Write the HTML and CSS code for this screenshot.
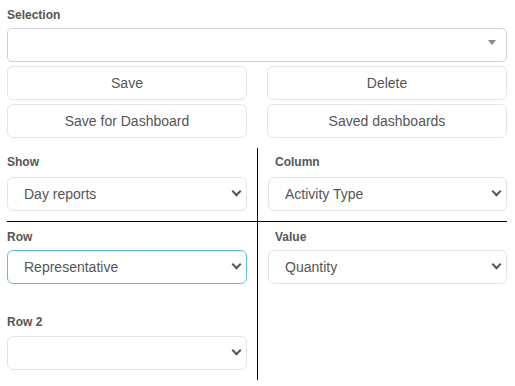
FILE: index.html
```html
<!DOCTYPE html>
<html>
<head>
<meta charset="utf-8">
<link rel="stylesheet" href="styles.css">
</head>
<body>
<div class="page">
  <label class="lbl lbl-top">Selection</label>
  <div class="sel2"><span class="sel2-arrow"></span></div>
  <div class="btn-grid">
    <button class="btn">Save</button>
    <button class="btn">Delete</button>
    <button class="btn">Save for Dashboard</button>
    <button class="btn">Saved dashboards</button>
  </div>
  <div class="pivot">
    <div class="cell cell-l top">
      <label class="lbl">Show</label>
      <div class="select-wrap"><select class="select"><option>Day reports</option></select></div>
    </div>
    <div class="cell cell-r top">
      <label class="lbl lbl-r">Column</label>
      <div class="select-wrap"><select class="select"><option>Activity Type</option></select></div>
    </div>
    <div class="cell cell-l bottom">
      <div class="group">
        <label class="lbl">Row</label>
        <div class="select-wrap"><select class="select focus"><option>Representative</option></select></div>
      </div>
      <div class="group group-2">
        <label class="lbl">Row 2</label>
        <div class="select-wrap"><select class="select"><option></option></select></div>
      </div>
    </div>
    <div class="cell cell-r bottom">
      <label class="lbl lbl-r">Value</label>
      <div class="select-wrap"><select class="select"><option>Quantity</option></select></div>
    </div>
  </div>
</div>
</body>
</html>
```
FILE: styles.css
```css
* { box-sizing: border-box; }
body {
  margin: 0;
  background: #fff;
  font-family: "Liberation Sans", Arial, sans-serif;
  color: #555;
}
.page {
  width: 500px;
  margin-left: 7px;
  padding-top: 8px;
}
.lbl {
  display: block;
  font-size: 12px;
  font-weight: bold;
  line-height: 15px;
  margin-bottom: 7px;
  color: #555;
}
.lbl-top { margin-bottom: 5px; }
.lbl-r { padding-left: 7px; }
.sel2 {
  height: 34px;
  border: 1px solid #c9d2dc;
  border-radius: 5px;
  display: flex;
  justify-content: flex-end;
  align-items: flex-start;
  padding: 11px 10px 0 0;
}
.sel2-arrow {
  width: 0;
  height: 0;
  border-style: solid;
  border-width: 5px 4px 0 4px;
  border-color: #888 transparent transparent transparent;
}
.btn-grid {
  margin-top: 4px;
  display: grid;
  grid-template-columns: 240px 240px;
  column-gap: 20px;
  row-gap: 4px;
}
.btn {
  height: 34px;
  border: 1px solid #e6e6e6;
  border-radius: 6px;
  background: #fff;
  font-family: "Liberation Sans", Arial, sans-serif;
  font-size: 14px;
  color: #555;
  padding: 0;
}
.pivot {
  margin-top: 10px;
  display: grid;
  grid-template-columns: 250px 250px;
}
.cell-l { padding-right: 10px; }
.cell-r { padding-left: 10px; border-left: 1px solid #000; }
.top {
  padding-top: 7px;
  padding-bottom: 10px;
  border-bottom: 1px solid #000;
}
.bottom {
  padding-top: 8px;
  padding-bottom: 10px;
}
.bottom .lbl { margin-bottom: 5px; }
.group-2 { margin-top: 31px; }
.bottom .group-2 .lbl { margin-bottom: 6px; }
.select-wrap { position: relative; }
.select-wrap::after {
  content: "";
  position: absolute;
  right: 7px;
  top: 50%;
  margin-top: -6px;
  width: 5px;
  height: 5px;
  border-right: 2px solid #555;
  border-bottom: 2px solid #555;
  transform: rotate(45deg);
  pointer-events: none;
}
.select {
  appearance: none;
  -webkit-appearance: none;
  display: block;
  width: 100%;
  height: 34px;
  border: 1px solid #e5e5e5;
  border-radius: 6px;
  background: #fff;
  padding: 0 30px 0 16px;
  font-family: "Liberation Sans", Arial, sans-serif;
  font-size: 14px;
  color: #555;
  outline: none;
}
.select.focus { border-color: #5bbfdd; }
```
